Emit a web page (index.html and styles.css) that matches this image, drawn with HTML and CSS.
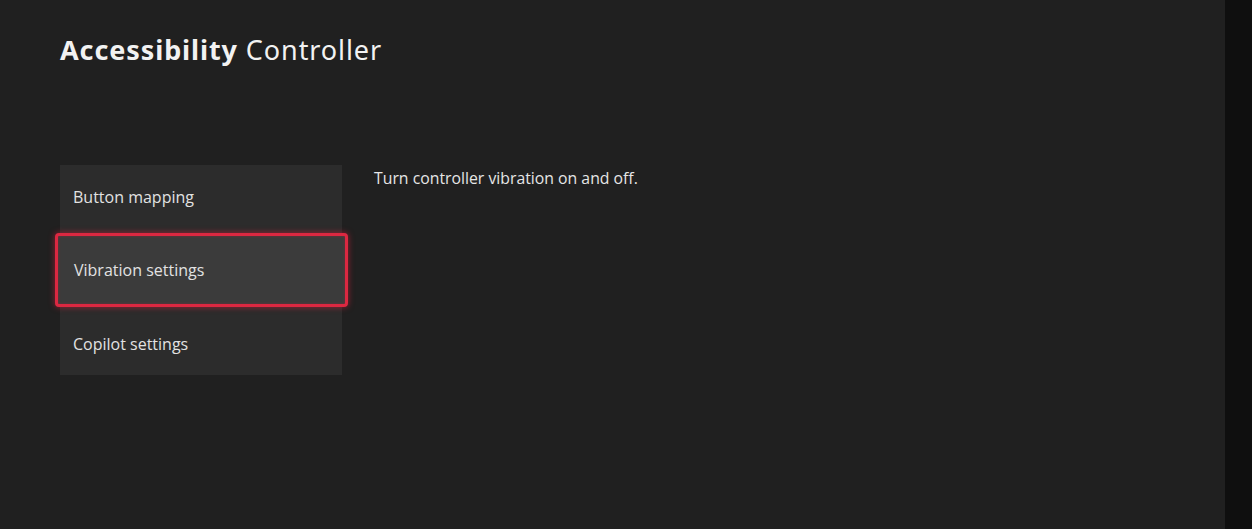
FILE: index.html
```html
<!DOCTYPE html>
<html lang="en">

<head>
    <meta charset="UTF-8">
    <meta name="viewport" content="width=device-width, initial-scale=1.0">
    <title>Accessibility - Controller</title>
    <link rel="stylesheet" href="styles.css">
</head>

<body>
    <div class="screen">
        <main class="settings">
            <header>
                <h1><strong>Accessibility</strong> Controller</h1>
            </header>

            <div class="settings-body">
                <ul class="menu">
                    <li class="menu-item">Button mapping</li>
                    <li class="menu-item selected">Vibration settings</li>
                    <li class="menu-item">Copilot settings</li>
                </ul>

                <p class="description">Turn controller vibration on and off.</p>
            </div>
        </main>

        <aside class="side-strip"></aside>
    </div>
</body>

</html>
```

FILE: styles.css
```css
* {
    margin: 0;
    padding: 0;
    box-sizing: border-box;
}

body {
    background: #202020;
    font-family: "Open Sans", "Noto Sans", sans-serif;
    color: #e6e6e6;
    height: 100vh;
    overflow: hidden;
}

.screen {
    display: flex;
    height: 100%;
}

.settings {
    width: 1225px;
    padding: 31px 60px 0;
}

header h1 {
    font-family: "Noto Sans", sans-serif;
    font-size: 27px;
    font-weight: 400;
    line-height: 38px;
    color: #f2f2f2;
    letter-spacing: 0.9px;
}

header h1 strong {
    font-weight: 700;
}

.settings-body {
    display: flex;
    align-items: flex-start;
    margin-top: 96px;
}

.menu {
    list-style: none;
    width: 282px;
    background: #2c2c2c;
}

.menu-item {
    height: 68px;
    display: flex;
    align-items: center;
    padding: 0 13px 4px;
    font-size: 16px;
    color: #e2e2e2;
}

.menu-item:last-child {
    padding: 6px 13px 0;
}

.menu-item.selected {
    height: 74px;
    margin: 0 -6px 0 -5px;
    padding: 0 16px;
    background: #3b3b3b;
    border: 3px solid #dc2841;
    border-radius: 4px;
    box-shadow: 0 0 6px rgba(230, 30, 60, 0.6), inset 0 0 3px rgba(230, 30, 60, 0.35);
}

.description {
    margin-left: 32px;
    padding-top: 2px;
    font-size: 15.8px;
    color: #e6e6e6;
}

.side-strip {
    flex: 1;
    background: #0f0f0f;
}
```
